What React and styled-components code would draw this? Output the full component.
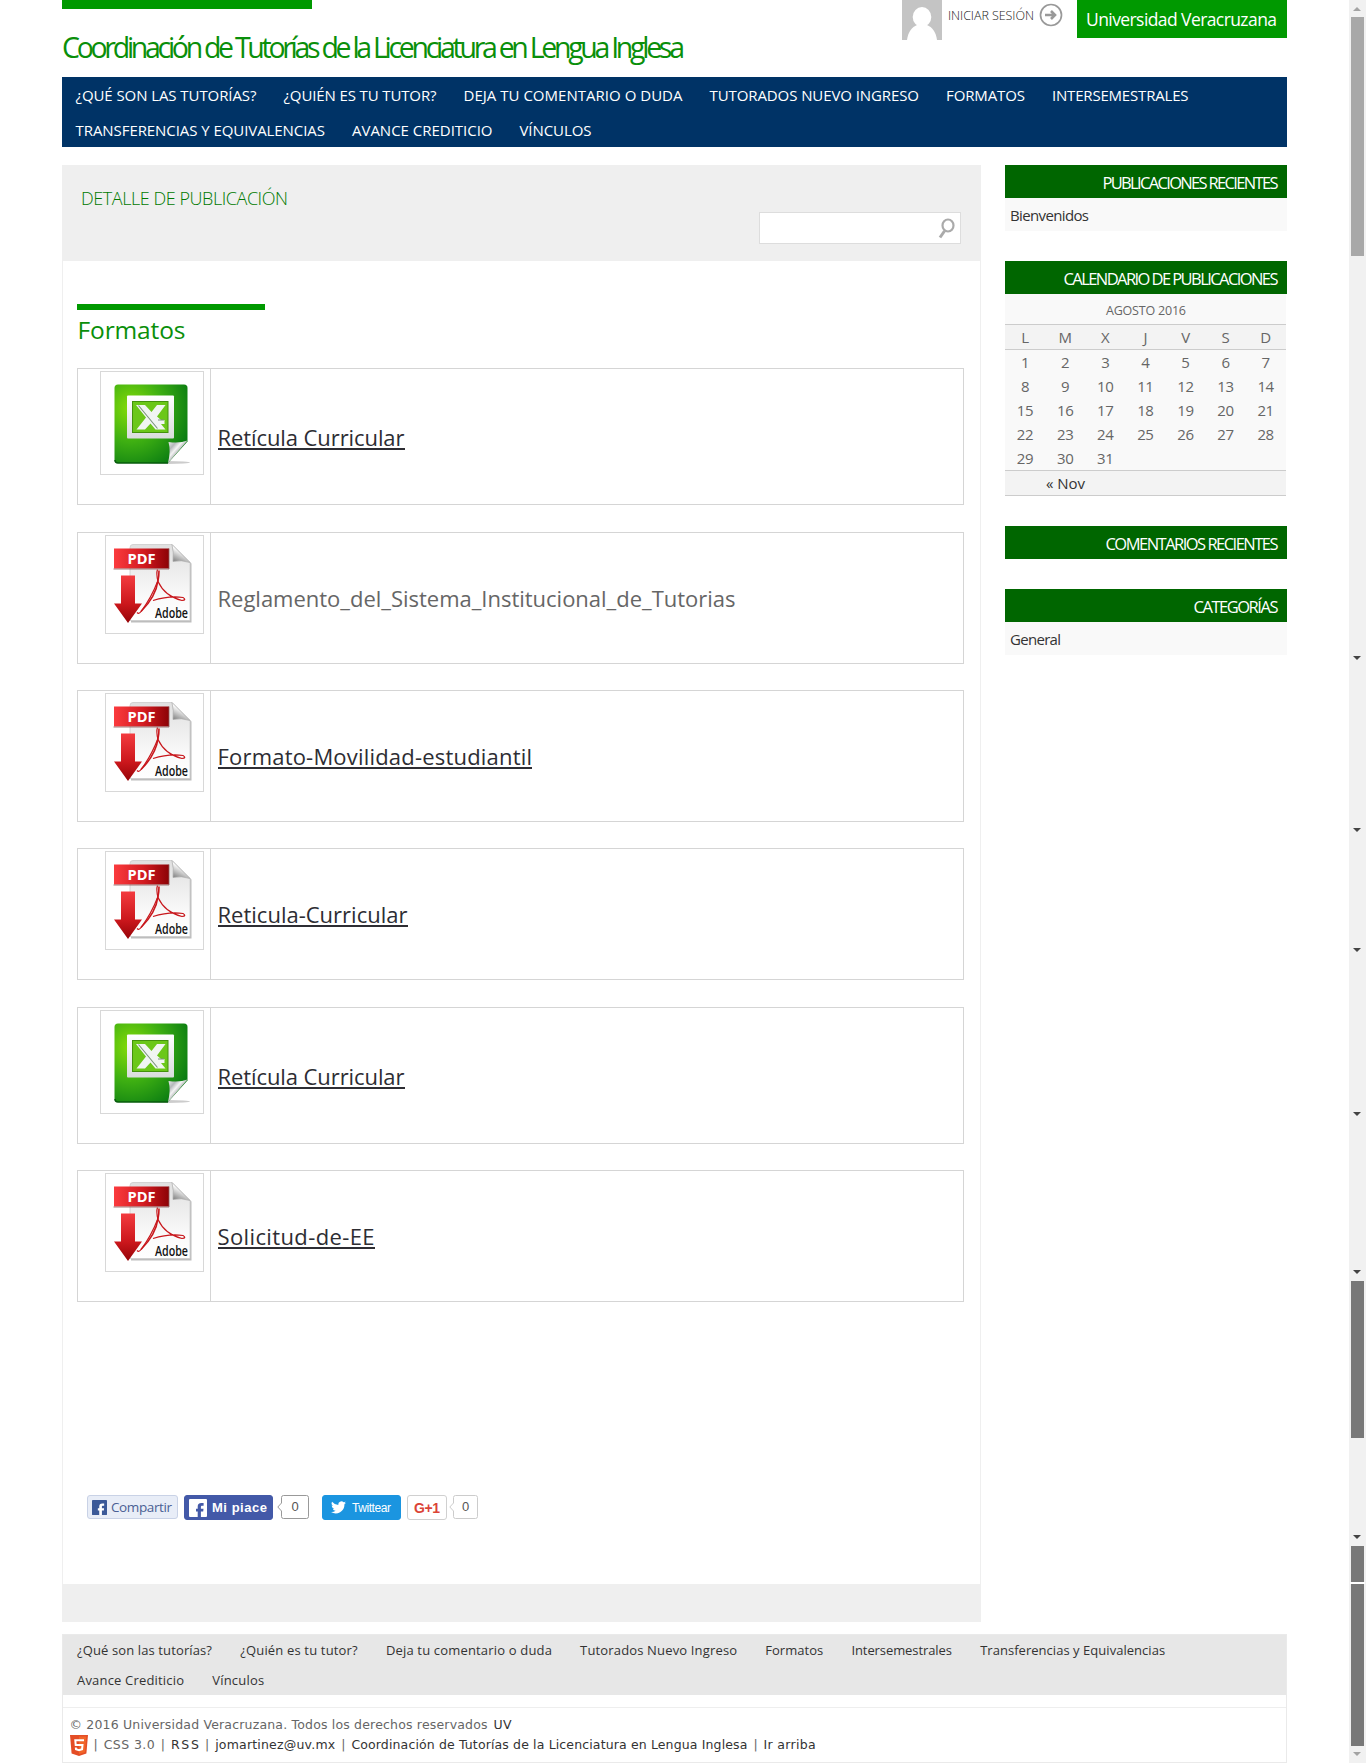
import React, { useLayoutEffect, useRef, useState } from "react";
import styled, { createGlobalStyle } from "styled-components";

const Global = createGlobalStyle`
  * { box-sizing: border-box; }
  body { margin: 0; background: #fff; font-family: "Open Sans", "Noto Sans", sans-serif; color: #666; }
  a { color: inherit; text-decoration: none; }
`;

/* Tracks its text so that it spans exactly the given measure. */
const FitBox = styled.span`
  display: inline-block;
  flex: none;
  width: ${(p) => p.$w}px;
  white-space: nowrap;
`;
function Fit({ w, children }) {
  const ref = useRef(null);
  const [spacing, setSpacing] = useState(0);
  useLayoutEffect(() => {
    const natural = ref.current.getBoundingClientRect().width;
    setSpacing((w - natural) / Math.max(1, children.length - 1));
  }, [w, children]);
  return (
    <FitBox $w={w}>
      <span ref={ref} style={{ letterSpacing: `${spacing}px` }}>{children}</span>
    </FitBox>
  );
}

const Page = styled.div`
  display: flex;
  justify-content: space-between;
  width: 1366px;
  height: 1763px;
  overflow: hidden;
  background: #fff;
`;
const Site = styled.div`
  width: 1225px;
  margin-left: 62px;
`;

/* ---------- header ---------- */
const Header = styled.header`
  display: flex;
  justify-content: space-between;
  height: 77px;
`;
const Accent = styled.div`
  width: ${(p) => p.$w}px;
  height: ${(p) => p.$h}px;
  background: #009900;
`;
const SiteTitle = styled.h1`
  margin: 18px 0 0;
  font-size: 28.5px;
  line-height: 40px;
  font-weight: 400;
  color: #0a8f0a;
`;
const Account = styled.div`
  display: flex;
  align-items: flex-start;
`;
const Login = styled.a`
  margin: 0 5px 0 6px;
  font-size: 12.5px;
  line-height: 32px;
  font-weight: 300;
  color: #222;
`;
const ArrowIcon = styled.svg`
  display: block;
  margin: 3px 14px 0 0;
`;
const University = styled.a`
  width: 210px;
  height: 38px;
  padding-left: 9px;
  font-size: 17.5px;
  line-height: 39px;
  color: #fff;
  background: #009900;
`;

/* ---------- navigation ---------- */
const Nav = styled.nav`
  height: 70px;
  background: #003366;
  color: #fff;
  font-size: 15px;
`;
const NavRow = styled.div`
  display: flex;
  gap: 27px;
  height: 35px;
  padding-left: 13.5px;
  line-height: 36px;
`;

/* ---------- main columns ---------- */
const Columns = styled.div`
  display: flex;
  gap: 24px;
  margin-top: 18px;
`;
const Panel = styled.main`
  width: 919px;
  height: 1457px;
  display: flex;
  flex-direction: column;
  border: 1px solid #efefef;
`;
const PanelHead = styled.div`
  height: 95px;
  padding: 20px 19px 0 18px;
  background: #efefef;
`;
const PanelTitle = styled.h2`
  margin: 0;
  font-size: 18px;
  line-height: 25px;
  font-weight: 300;
  color: #007a00;
`;
const Search = styled.div`
  display: flex;
  justify-content: flex-end;
  align-items: center;
  width: 202px;
  height: 32px;
  margin: 1px 0 0 auto;
  padding-right: 5px;
  background: #fff;
  border: 1px solid #ddd;
`;
const Body = styled.div`
  flex: 1;
  padding: 43px 16px 0 14px;
`;
const PostTitle = styled.h3`
  margin: 2px 0 0 0.5px;
  height: 56px;
  font-size: 24.5px;
  line-height: 35px;
  font-weight: 400;
  color: #0a8f0a;
`;
const FileList = styled.div`
  height: 1127px;
`;
const FileRow = styled.div`
  display: flex;
  height: ${(p) => (p.$excel ? 137 : 132)}px;
  margin-bottom: ${(p) => p.$gap}px;
  border: 1px solid #d5d5d5;
`;
const IconCell = styled.div`
  display: flex;
  justify-content: flex-end;
  width: 133px;
  padding: 2px 6px 0 0;
  border-right: 1px solid #d5d5d5;
`;
const Thumb = styled.div`
  display: flex;
  align-items: flex-start;
  justify-content: flex-start;
  width: ${(p) => p.$size}px;
  height: ${(p) => p.$size}px;
  border: 1px solid #d8d8d8;
`;
const NameCell = styled.div`
  padding: ${(p) => (p.$excel ? 53 : 50)}px 0 0 6.5px;
  font-size: 22px;
  line-height: 30px;
  color: ${(p) => (p.$link ? "#2d2d33" : "#666")};
`;
const Underlined = styled.a`
  display: block;
  height: 29px;
  margin-top: -1px;
  border-bottom: ${(p) => (p.$on ? "2px solid #2d2d33" : "0")};
  line-height: 32px;
`;
const Share = styled.div`
  display: flex;
  align-items: flex-start;
  padding-left: 10px;
  height: 26px;
`;
const ShareButton = styled.a`
  display: flex;
  align-items: center;
  width: ${(p) => p.$w}px;
  height: ${(p) => p.$h || 25}px;
  margin-right: ${(p) => p.$mr || 0}px;
  padding-left: ${(p) => p.$pl}px;
  gap: ${(p) => p.$gap || 0}px;
  background: ${(p) => p.$bg};
  border: 1px solid ${(p) => p.$line};
  border-radius: 3px;
  color: ${(p) => p.$ink};
  font-size: ${(p) => p.$fs}px;
  font-family: ${(p) => (p.$arial ? '"Liberation Sans", sans-serif' : "inherit")};
  font-weight: ${(p) => (p.$bold ? 700 : 400)};
`;
const Bubble = styled.svg`
  display: block;
  margin-right: ${(p) => p.$mr}px;
`;
const PanelFoot = styled.div`
  height: 37px;
  background: #efefef;
`;

/* ---------- sidebar ---------- */
const Sidebar = styled.aside`
  width: 282px;
`;
const Widget = styled.section`
  margin-bottom: 30px;
`;
const WidgetTitle = styled.h4`
  display: flex;
  justify-content: flex-end;
  margin: 0;
  height: 33px;
  padding-right: 8.5px;
  font-size: 16.5px;
  line-height: 35px;
  font-weight: 400;
  color: #fff;
  background: #006600;
`;
const WidgetItem = styled.div`
  height: 33px;
  padding-left: 5px;
  font-size: 15px;
  line-height: 34px;
  color: #333;
  background: #f9f9f9;
`;
const Calendar = styled.div`
  width: 281px;
  background: #f9f9f9;
  font-size: 15px;
  color: #666;
`;
const Caption = styled.div`
  height: 30px;
  padding-left: 101px;
  font-size: 12.5px;
  line-height: 34px;
`;
const Week = styled.div`
  display: grid;
  grid-template-columns: repeat(7, 40.1px);
  height: ${(p) => (p.$band ? 26 : 24)}px;
  line-height: ${(p) => (p.$band ? 25 : 24)}px;
  text-align: center;
  letter-spacing: -0.4px;
  background: ${(p) => (p.$band ? "#f3f3f3" : "transparent")};
  border: solid #ccc;
  border-width: ${(p) => (p.$band ? "1px 0" : 0)};
`;
const PrevMonth = styled.a`
  grid-column: 2 / 4;
  padding-left: 1px;
  text-align: left;
  letter-spacing: 0;
  color: #333;
`;

/* ---------- footer ---------- */
const Footer = styled.footer`
  margin-top: 12px;
  height: 129px;
  border: 1px solid #eaeaea;
`;
const FootNav = styled.div`
  height: 60px;
  padding: 0 0 0 14px;
  background: #e7e7e7;
  color: #333;
  font-size: 13px;
`;
const FootRow = styled.div`
  display: flex;
  gap: 28.2px;
  height: 30px;
  line-height: 30px;
`;
const Legal = styled.div`
  margin-top: 12px;
  padding: 7px 0 0 6.5px;
  border-top: 1px solid #eee;
  font-family: "DejaVu Sans", sans-serif;
  font-size: 12.5px;
  color: #666;
`;
const LegalRow = styled.div`
  display: flex;
  align-items: flex-start;
  height: ${(p) => p.$h}px;
  line-height: 20px;
  gap: ${(p) => p.$gap}px;
`;
const Dark = styled.a`
  color: #333;
`;

/* ---------- scroll bar ---------- */
const Track = styled.div`
  display: flex;
  flex-direction: column;
  align-items: center;
  width: 17px;
  padding-right: 1px;
  background: #f1f1f1;
`;
const Gap = styled.div`
  flex: none;
  height: ${(p) => p.$h}px;
`;
const Handle = styled.div`
  flex: none;
  width: 13px;
  height: ${(p) => p.$h}px;
  background: ${(p) => p.$c};
`;
const Seam = styled.div`
  flex: none;
  width: 15px;
  height: 2px;
  background: #fff;
`;
const Caret = styled.div`
  flex: none;
  width: 8px;
  height: 4px;
  background: ${(p) => p.$c || "#444"};
  clip-path: ${(p) => (p.$up ? "polygon(50% 0, 100% 100%, 0 100%)" : "polygon(0 0, 100% 0, 50% 100%)")};
`;

const Avatar = () => (
  <svg width="40" height="40" viewBox="0 0 40 40">
    <rect width="40" height="40" fill="#c4c4c4" />
    <ellipse cx="20" cy="17" rx="9.3" ry="10" fill="#fff" />
    <path d="M5 40C6 32 10 27 15 25H25C30 27 34 32 35 40Z" fill="#fff" />
  </svg>
);

const ExcelIcon = ({ id }) => (
  <svg width="102" height="102" viewBox="1 0.5 102 102">
    <defs>
      <radialGradient id={`${id}g`} cx=".22" cy=".3" r=".85">
        <stop offset="0" stopColor="#86dc08" />
        <stop offset=".5" stopColor="#3fb012" />
        <stop offset="1" stopColor="#0b7d12" />
      </radialGradient>
      <linearGradient id={`${id}w`} x1="0" y1="0" x2="0" y2="1">
        <stop offset="0" stopColor="#fff" /><stop offset="1" stopColor="#d9dcdc" />
      </linearGradient>
      <linearGradient id={`${id}c`} x1="0" y1="0" x2=".6" y2=".6">
        <stop offset="0" stopColor="#f6f7f7" /><stop offset=".4" stopColor="#b4b8ba" />
        <stop offset=".65" stopColor="#f4f4f4" /><stop offset="1" stopColor="#8f9496" />
      </linearGradient>
    </defs>
    <ellipse cx="68" cy="91" rx="22" ry="1.5" fill="#ccc" />
    <path d="M18 13H84Q87.500 13 87.500 16.500V70L68 91.500H18Q14.500 91.500 14.500 88V16.500Q14.500 13 18 13Z" fill={`url(#${id}g)`} />
    <path d="M15 88.500Q15 91.500 18 91.500H68" stroke="#075c0c" strokeWidth="1.500" fill="none" />
    <path d="M28 24H73Q74 24 74 25V66Q74 67 73 67H28Q27 67 27 66V25Q27 24 28 24Z" fill={`url(#${id}w)`} />
    <rect x="32.5" y="30" width="35.5" height="31" fill="#6bc719" stroke="#43920c" />
    <path d="M36 33.500H45L51.500 40.500L57 33.500H65.500L57 45L61 48.500H64.500V52.500H61L65.500 58H55.500L50.500 52L45 58H36.500L46 46Z" fill="#f1f5f2" />
    <path d="M38.500 34L57.500 57M58 48.500H64" stroke="#7b927c" strokeWidth="1.100" />
    <path d="M68.500 70.500Q80 72 87.500 69L68 91.500Q71 80 68.500 70.500Z" fill={`url(#${id}c)`} />
  </svg>
);

const PdfIcon = ({ id }) => (
  <svg width="97" height="97" viewBox="1 0.5 97 97">
    <defs>
      <linearGradient id={`${id}r`}>
        <stop offset="0" stopColor="#fb3b3e" /><stop offset=".55" stopColor="#d11a20" /><stop offset="1" stopColor="#8c0206" />
      </linearGradient>
      <linearGradient id={`${id}a`} x1="0" y1="0" x2="0" y2="1">
        <stop offset="0" stopColor="#f33b3f" /><stop offset=".6" stopColor="#cb171c" /><stop offset="1" stopColor="#960408" />
      </linearGradient>
      <linearGradient id={`${id}p`} x1="0" y1="0" x2="0" y2="1">
        <stop offset="0" stopColor="#e0e0e0" /><stop offset=".7" stopColor="#fafafa" /><stop offset="1" stopColor="#fff" />
      </linearGradient>
      <linearGradient id={`${id}f`} x1=".3" y1="1" x2=".6" y2=".4">
        <stop offset="0" stopColor="#888" /><stop offset="1" stopColor="#fff" />
      </linearGradient>
    </defs>
    <path d="M28 10H67L86.500 28V87H26V13Q26 10 28 10Z" fill="#bdbdbd" />
    <path d="M28 9H67L85 27V85H25V12Q25 9 28 9Z" fill={`url(#${id}p)`} stroke="#ccc" strokeWidth=".8" />
    <path d="M67 9L85 27Q76 24 68 26Q69 17 67 9Z" fill={`url(#${id}f)`} stroke="#aaa" strokeWidth=".7" />
    <path d="M52.500 34Q51 38 53 46Q60 61 77 65Q82 64.500 78 62Q64 60 48 65" stroke="#c8171c" strokeWidth="1.200" fill="none" />
    <path d="M54 35Q54 40 53 45Q51 61 36 76" stroke="#c8171c" strokeWidth="1.600" fill="none" />
    <path d="M53 45Q46 63 36 76Q34 79 32 77" stroke="#c8171c" strokeWidth="1.200" fill="none" />
    <rect x="9" y="13" width="55" height="20" fill={`url(#${id}r)`} />
    <path d="M8.500 33.500H64V13" fill="none" stroke="#8b5a5a" strokeWidth=".8" />
    <path d="M16 40H30V68H37L23 87.500L9 68H16Z" fill={`url(#${id}a)`} />
    <text x="22.5" y="28.5" fontFamily="Open Sans" fontWeight="700" fontSize="15" fill="#fff" textLength="28" lengthAdjust="spacingAndGlyphs">PDF</text>
    <text x="50" y="82.5" fontFamily="Open Sans" fontWeight="600" fontSize="14" fill="#111" textLength="33" lengthAdjust="spacingAndGlyphs">Adobe</text>
  </svg>
);

const F_PATH = "M14.500 9.800H11.900V8.100C11.900 7.100 12.300 6.800 13.200 6.800H14.600V4.100H12.400C9.800 4.100 8.700 5.400 8.700 7.800V9.800H7V12.500H8.700V18H11.900V12.500H14.200Z";
const Facebook = ({ size, bg, ink }) => (
  <svg width={size} height={size} viewBox="0 0 18 18">
    <rect width="18" height="18" rx="1" fill={bg} />
    <path d={F_PATH} fill={ink} />
  </svg>
);

const Count = ({ line, mr, w }) => (
  <Bubble $mr={mr} width={w} height="25" viewBox={`0 0 ${w} 25`}>
    <path d={`M6.500 .5H${w - 2.5}Q${w - 0.5} .5 ${w - 0.5} 2.500V21.500Q${w - 0.5} 23.500 ${w - 2.5} 23.500H6.500Q4.500 23.500 4.500 21.500V16L.8 12L4.500 8V2.500Q4.500 .5 6.500 .5Z`} fill="#fff" stroke={line} />
    <text x={w / 2 - 1.5} y="16" fontFamily="Liberation Sans" fontSize="13" fill="#555">0</text>
  </Bubble>
);

const NAV = [
  [["¿QUÉ SON LAS TUTORÍAS?", 181], ["¿QUIÉN ES TU TUTOR?", 153], ["DEJA TU COMENTARIO O DUDA", 219], ["TUTORADOS NUEVO INGRESO", 209.5], ["FORMATOS", 79], ["INTERSEMESTRALES", 136.5]],
  [["TRANSFERENCIAS Y EQUIVALENCIAS", 249.5], ["AVANCE CREDITICIO", 140.500], ["VÍNCULOS", 72]],
];
const FOOT = [
  [["¿Qué son las tutorías?", 135], ["¿Quién es tu tutor?", 117.500], ["Deja tu comentario o duda", 166], ["Tutorados Nuevo Ingreso", 157], ["Formatos", 58], ["Intersemestrales", 100.5], ["Transferencias y Equivalencias", 185]],
  [["Avance Crediticio", 107], ["Vínculos", 52]],
];
const FILES = [
  { name: "Retícula Curricular", w: 187, excel: true, link: true, gap: 27 },
  { name: "Reglamento_del_Sistema_Institucional_de_Tutorias", w: 518, gap: 26 },
  { name: "Formato-Movilidad-estudiantil", w: 314.5, link: true, gap: 26 },
  { name: "Reticula-Curricular", w: 190, link: true, gap: 27 },
  { name: "Retícula Curricular", w: 187, excel: true, link: true, gap: 26 },
  { name: "Solicitud-de-EE", w: 157, link: true, gap: 0 },
];
const WEEKS = [0, 1, 2, 3, 4].map((w) => [1, 2, 3, 4, 5, 6, 7].map((d) => w * 7 + d).filter((d) => d <= 31));

export default function App() {
  return (
    <>
      <Global />
      <Page>
        <Site>
          <Header>
            <div>
              <Accent $w={250} $h={9} />
              <SiteTitle><Fit w={623}>Coordinación de Tutorías de la Licenciatura en Lengua Inglesa</Fit></SiteTitle>
            </div>
            <Account>
              <Avatar />
              <Login href="#"><Fit w={86}>INICIAR SESIÓN</Fit></Login>
              <ArrowIcon width="24" height="24" viewBox="0 0 24 24" fill="none" stroke="#999">
                <circle cx="12" cy="12" r="10.500" strokeWidth="1.700" />
                <path d="M6 12H15M12 8L16 12L12 16" strokeWidth="2.600" />
              </ArrowIcon>
              <University href="#"><Fit w={191}>Universidad Veracruzana</Fit></University>
            </Account>
          </Header>
          <Nav>
            {NAV.map((row, i) => (
              <NavRow key={i}>{row.map(([t, w]) => <a href="#" key={t}><Fit w={w}>{t}</Fit></a>)}</NavRow>
            ))}
          </Nav>
          <Columns>
            <Panel>
              <PanelHead>
                <PanelTitle><Fit w={207}>DETALLE DE PUBLICACIÓN</Fit></PanelTitle>
                <Search>
                  <svg width="17" height="21" viewBox="0 0 17 21" fill="none" stroke="#aaa">
                    <ellipse cx="10" cy="7.500" rx="5.500" ry="6" strokeWidth="2.200" />
                    <path d="M6.500 13L2 19.500" strokeWidth="3" />
                  </svg>
                </Search>
              </PanelHead>
              <Body>
                <Accent $w={188} $h={6} />
                <PostTitle><Fit w={108}>Formatos</Fit></PostTitle>
                <FileList>
                  {FILES.map((f, i) => (
                    <FileRow key={i} $excel={f.excel} $gap={f.gap}>
                      <IconCell>
                        <Thumb $size={f.excel ? 104 : 99}>
                          {f.excel ? <ExcelIcon id={`x${i}`} /> : <PdfIcon id={`p${i}`} />}
                        </Thumb>
                      </IconCell>
                      <NameCell $excel={f.excel} $link={f.link}>
                        <Underlined $on={f.link}><Fit w={f.w}>{f.name}</Fit></Underlined>
                      </NameCell>
                    </FileRow>
                  ))}
                </FileList>
                <Share>
                  <ShareButton $w={91} $h={24} $mr={6} $pl={4} $gap={4} $bg="#e8edf7" $line="#c9d2e6" $ink="#4a5f94" $fs={13.5}>
                    <Facebook size={15} bg="#3b5998" ink="#fff" /><Fit w={61}>Compartir</Fit>
                  </ShareButton>
                  <ShareButton $w={89} $mr={4} $pl={4} $gap={5} $bg="#4359a8" $line="#4359a8" $ink="#fff" $fs={13} $arial $bold>
                    <Facebook size={18} bg="#fff" ink="#4359a8" /><Fit w={55}>Mi piace</Fit>
                  </ShareButton>
                  <Count line="#999" mr={13} w={32} />
                  <ShareButton $w={79} $mr={6} $pl={8} $gap={6} $bg="#1b95e0" $line="#1b95e0" $ink="#fff" $fs={12} $arial>
                    <svg width="15" height="13" viewBox="0 0 24 20">
                      <path d="M24 2.400A10 10 0 0 1 21.200 3.100A5 5 0 0 0 23.300.4A10 10 0 0 1 20.200 1.600A5 5 0 0 0 11.800 6.100A14 14 0 0 1 1.700.9A5 5 0 0 0 3.200 7.500A5 5 0 0 1 1 6.900A5 5 0 0 0 4.900 11.700A5 5 0 0 1 2.700 11.800A5 5 0 0 0 7.300 15.200A10 10 0 0 1 0 17.200A14 14 0 0 0 21.500 4.800A10 10 0 0 0 24 2.400Z" fill="#fff" />
                    </svg>
                    <Fit w={39}>Twittear</Fit>
                  </ShareButton>
                  <ShareButton $w={40} $mr={2} $pl={6} $bg="#fff" $line="#d0d0d0" $ink="#db4437" $fs={14} $arial $bold>
                    <Fit w={26}>G+1</Fit>
                  </ShareButton>
                  <Count line="#ccc" mr={0} w={29} />
                </Share>
              </Body>
              <PanelFoot />
            </Panel>
            <Sidebar>
              <Widget>
                <WidgetTitle><Fit w={176}>PUBLICACIONES RECIENTES</Fit></WidgetTitle>
                <WidgetItem><Fit w={79}>Bienvenidos</Fit></WidgetItem>
              </Widget>
              <Widget>
                <WidgetTitle><Fit w={215}>CALENDARIO DE PUBLICACIONES</Fit></WidgetTitle>
                <Calendar>
                  <Caption><Fit w={80}>AGOSTO 2016</Fit></Caption>
                  <Week $band>{["L", "M", "X", "J", "V", "S", "D"].map((d) => <span key={d}>{d}</span>)}</Week>
                  {WEEKS.map((w, i) => <Week key={i}>{w.map((d) => <span key={d}>{d}</span>)}</Week>)}
                  <Week $band><PrevMonth href="#"><Fit w={39}>« Nov</Fit></PrevMonth></Week>
                </Calendar>
              </Widget>
              <Widget><WidgetTitle><Fit w={173}>COMENTARIOS RECIENTES</Fit></WidgetTitle></Widget>
              <Widget>
                <WidgetTitle><Fit w={85}>CATEGORÍAS</Fit></WidgetTitle>
                <WidgetItem><Fit w={51}>General</Fit></WidgetItem>
              </Widget>
            </Sidebar>
          </Columns>
          <Footer>
            <FootNav>
              {FOOT.map((row, i) => (
                <FootRow key={i}>{row.map(([t, w]) => <a href="#" key={t}><Fit w={w}>{t}</Fit></a>)}</FootRow>
              ))}
            </FootNav>
            <Legal>
              <LegalRow $h={20} $gap={6}>
                <Fit w={418}>© 2016 Universidad Veracruzana. Todos los derechos reservados</Fit>
                <Dark><Fit w={18}>UV</Fit></Dark>
              </LegalRow>
              <LegalRow $h={22} $gap={6}>
                <svg width="18" height="21" viewBox="0 0 18 21">
                  <path d="M0 0H18L16.400 18.500L9 21L1.600 18.500Z" fill="#e44d26" />
                  <path d="M9 1.500H16.300L15 17.300L9 19.300Z" fill="#f16529" />
                  <path d="M14 5.200H5.300L5.700 10H12.500L12.100 14.200L9 15.200L6 14.200L5.800 12.500" fill="none" stroke="#fff" strokeWidth="2" />
                </svg>
                <span>|</span><Fit w={51}>CSS 3.0</Fit>
                <span>|</span><Dark><Fit w={28}>RSS</Fit></Dark>
                <span>|</span><Dark><Fit w={120}>jomartinez@uv.mx</Fit></Dark>
                <span>|</span><Dark><Fit w={396}>Coordinación de Tutorías de la Licenciatura en Lengua Inglesa</Fit></Dark>
                <span>|</span><Dark><Fit w={52}>Ir arriba</Fit></Dark>
              </LegalRow>
            </Legal>
          </Footer>
        </Site>
        <Track>
          <Gap $h={7} /><Caret $up $c="#a3a3a3" />
          <Gap $h={6} /><Handle $h={239} $c="#a8a8a8" />
          <Gap $h={400} /><Caret />
          <Gap $h={168} /><Caret />
          <Gap $h={116} /><Caret />
          <Gap $h={160} /><Caret />
          <Gap $h={154} /><Caret />
          <Gap $h={7} /><Handle $h={157} $c="#787878" />
          <Gap $h={97} /><Caret />
          <Gap $h={7} /><Handle $h={36} $c="#787878" /><Seam />
          <Handle $h={162} $c="#787878" />
          <Gap $h={6} /><Caret $c="#a3a3a3" />
        </Track>
      </Page>
    </>
  );
}
